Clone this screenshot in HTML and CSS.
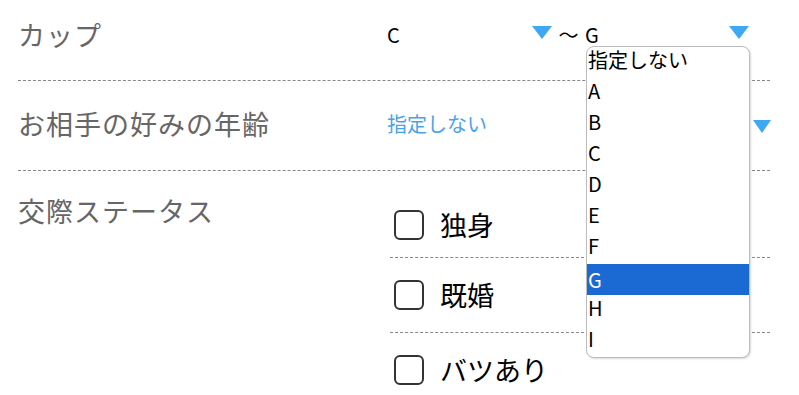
FILE: index.html
```html
<!DOCTYPE html>
<html lang="ja">
<head>
<meta charset="utf-8">
<link rel="stylesheet" href="styles.css">
</head>
<body>
<div class="form">
  <div class="row row-cup">
    <div class="label">カップ</div>
    <div class="field range">
      <div class="sel sel-c"><span class="val">C</span><span class="tri"></span></div>
      <span class="tilde">～</span>
      <div class="sel sel-g"><span class="val">G</span><span class="tri"></span>
        <div class="dropdown">
          <div class="opt">指定しない</div>
          <div class="opt">A</div>
          <div class="opt">B</div>
          <div class="opt">C</div>
          <div class="opt">D</div>
          <div class="opt">E</div>
          <div class="opt">F</div>
          <div class="opt active">G</div>
          <div class="opt">H</div>
          <div class="opt">I</div>
        </div>
      </div>
    </div>
  </div>
  <div class="row row-age">
    <div class="label">お相手の好みの年齢</div>
    <div class="field">
      <div class="sel sel-wide"><span class="val blue">指定しない</span><span class="tri small"></span></div>
    </div>
  </div>
  <div class="row row-status">
    <div class="label">交際ステータス</div>
    <div class="checks">
      <div class="check first"><span class="box"></span><span class="ctext">独身</span></div>
      <div class="check"><span class="box"></span><span class="ctext">既婚</span></div>
      <div class="check last"><span class="box"></span><span class="ctext">バツあり</span></div>
    </div>
  </div>
</div>
</body>
</html>
```
FILE: styles.css
```css
html, body {
  margin: 0;
  padding: 0;
  background: #fff;
}
body {
  font-family: "Noto Sans CJK JP", "Noto Sans", sans-serif;
  color: #000;
  overflow: hidden;
  height: 395px;
}
.form {
  padding-left: 18px;
  width: 752px;
}
.row {
  display: flex;
  border-bottom: 1px dashed #888;
}
.row-cup {
  height: 70px;
  padding-bottom: 10px;
  align-items: center;
}
.row-age {
  height: 86px;
  padding-bottom: 3px;
  align-items: center;
}
.row-status {
  border-bottom: none;
  align-items: flex-start;
}
.label {
  width: 369px;
  flex: none;
  font-size: 27px;
  letter-spacing: 1px;
  color: #666;
  line-height: 34px;
}
.row-status .label {
  padding-top: 23px;
}
.field {
  display: flex;
  align-items: center;
  flex: 1;
}
.sel {
  position: relative;
  display: flex;
  align-items: center;
  justify-content: space-between;
  height: 30px;
}
.val {
  font-size: 20px;
  line-height: 22px;
}
.blue {
  color: #4aa3e8;
}
.sel-c {
  width: 165px;
}
.sel-g {
  width: 164px;
}
.sel-wide {
  width: 384px;
}
.tri {
  width: 0;
  height: 0;
  border-left: 10px solid transparent;
  border-right: 10px solid transparent;
  border-top: 13px solid #3ea8f2;
  margin-top: -6px;
}
.tri.small {
  border-left-width: 9.5px;
  border-right-width: 9.5px;
  border-top-width: 13px;
  margin-top: 4px;
}
.tilde {
  width: 33px;
  text-align: center;
  font-size: 20px;
  line-height: 22px;
}
.dropdown {
  position: absolute;
  left: 1px;
  top: 26px;
  width: 162px;
  background: #fff;
  border: 1px solid #bdbdbd;
  border-radius: 8px;
  box-shadow: 1px 1px 2px rgba(0, 0, 0, 0.15);
  z-index: 5;
  overflow: hidden;
}
.opt {
  height: 31px;
  box-sizing: border-box;
  padding-left: 1px;
  font-size: 20px;
  line-height: 26px;
  color: #000;
}
.opt.active {
  background: #1b69d3;
  color: #fff;
  line-height: 31px;
}
.checks {
  flex: 1;
  margin-left: 3px;
  margin-top: 17px;
}
.check {
  display: flex;
  align-items: center;
  padding: 22px 0;
  border-bottom: 1px dashed #888;
}
.check.first {
  padding-bottom: 17px;
}
.check.last {
  border-bottom: none;
}
.box {
  width: 26px;
  height: 26px;
  border: 2px solid #333;
  border-radius: 6px;
  margin-left: 4px;
  flex: none;
}
.ctext {
  margin-left: 16px;
  font-size: 27px;
  line-height: 30px;
}
```
